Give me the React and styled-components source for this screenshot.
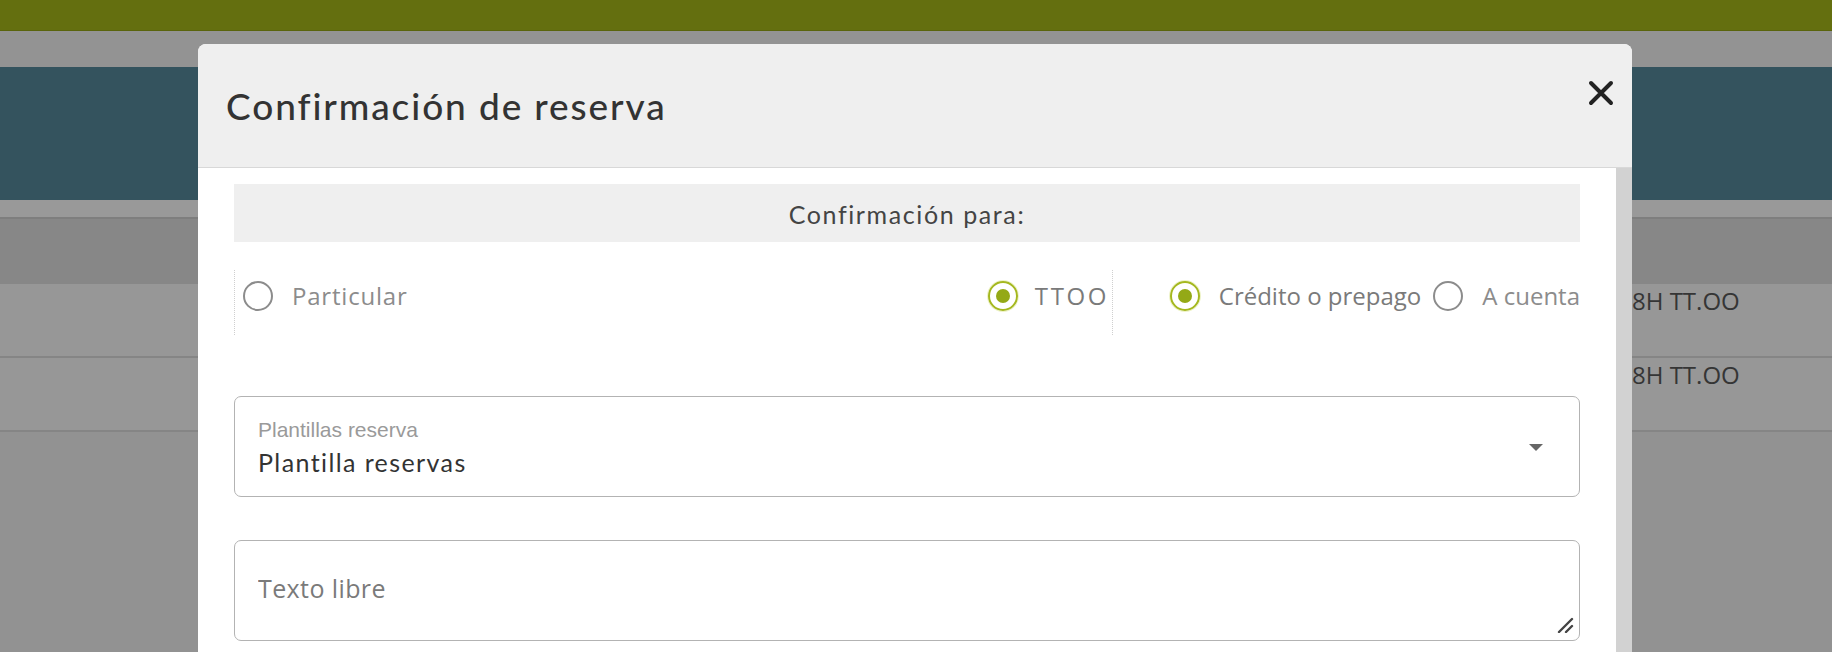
import React from "react";
import styled, { createGlobalStyle } from "styled-components";

const GlobalStyle = createGlobalStyle`
  html, body {
    margin: 0;
    padding: 0;
    overflow: hidden;
    background: #929292;
  }
  * { box-sizing: border-box; }
`;

const Page = styled.div`
  position: relative;
  width: 1832px;
  height: 652px;
  overflow: hidden;
  background: #929292;
  font-family: "Open Sans", sans-serif;
`;

const TopBar = styled.div`
  height: 31px;
  background: #646f0f;
  border-bottom: 1px solid #5a640c;
`;

const Spacer = styled.div`
  height: ${(p) => p.h}px;
  background: ${(p) => p.bg};
`;

const Banner = styled.div`
  height: 133px;
  background: #34535e;
`;

const TableHead = styled.div`
  height: 67px;
  background: #878787;
  border-top: 2px solid #7e7e7e;
`;

const TableRow = styled.div`
  height: 74px;
  background: #979797;
  border-bottom: 2px solid #858585;
  display: grid;
  grid-template-columns: 1632px 1fr;
`;

const Cell = styled.div`
  font-family: "Open Sans", sans-serif;
  font-size: 24px;
  color: #353535;
  letter-spacing: 0;
`;

const Modal = styled.div`
  position: absolute;
  left: 198px;
  top: 44px;
  width: 1434px;
  height: 640px;
  background: #fff;
  border-radius: 8px 8px 0 0;
  overflow: hidden;
  display: flex;
  flex-direction: column;
`;

const ModalHeader = styled.div`
  height: 124px;
  flex: none;
  background: #efefef;
  border-bottom: 1px solid #d8d8d8;
  display: flex;
  align-items: center;
  justify-content: space-between;
  padding: 0 16px 0 28px;
`;

const Title = styled.h2`
  margin: 0;
  font-family: Lato, sans-serif;
  font-weight: 500;
  font-size: 37px;
  color: #333;
  letter-spacing: 1.9px;
`;

const CloseButton = styled.button`
  align-self: flex-start;
  margin-top: 34px;
  width: 30px;
  height: 30px;
  padding: 0;
  border: 0;
  background: none;
  display: flex;
  align-items: center;
  justify-content: center;
  cursor: pointer;
`;

const ModalBody = styled.div`
  flex: 1;
  display: flex;
  min-height: 0;
`;

const Content = styled.div`
  flex: 1;
  padding: 16px 36px 0 36px;
`;

const Scrollbar = styled.div`
  width: 16px;
  flex: none;
  background: #d2d2d2;
`;

const SectionTitle = styled.div`
  height: 58px;
  background: #efefef;
  display: flex;
  align-items: center;
  justify-content: center;
  font-family: Lato, sans-serif;
  font-size: 25px;
  letter-spacing: 1.6px;
  color: #444;
  padding-top: 2px;
`;

const RadioRow = styled.div`
  margin-top: 28px;
  height: 65px;
  display: flex;
`;

const RadioGroup = styled.div`
  display: flex;
  align-items: center;
  justify-content: ${(p) => p.justify || "space-between"};
  gap: 12px;
  border-left: 1px dotted #cfcfcf;
  padding-left: ${(p) => p.pad || 0}px;
  padding-right: ${(p) => p.padRight || 0}px;
  padding-bottom: 14px;
  ${(p) => (p.grow ? "flex: 1;" : `width: ${p.w}px;`)}
`;

const RadioOption = styled.label`
  display: flex;
  align-items: center;
  gap: ${(p) => p.gap || 19}px;
  font-family: "Open Sans", sans-serif;
  font-size: 24px;
  letter-spacing: ${(p) => p.spacing || 0}px;
  color: ${(p) => (p.checked ? "#7a7a7a" : "#8c8c8c")};
  white-space: nowrap;
`;

const RadioMark = styled.span`
  width: 30px;
  height: 30px;
  border-radius: 50%;
  border: 2.5px solid ${(p) => (p.checked ? "#a5b81f" : "#8c8c8c")};
  box-shadow: ${(p) => (p.checked ? "0 0 0 1px #eef3c8" : "none")};
  display: flex;
  align-items: center;
  justify-content: center;
  flex: none;
  &::after {
    content: "";
    width: 14px;
    height: 14px;
    border-radius: 50%;
    background: #94a916;
    display: ${(p) => (p.checked ? "block" : "none")};
  }
`;

const Field = styled.div`
  position: relative;
  margin-top: ${(p) => p.mt}px;
  height: 101px;
  border: 1.5px solid #b3b3b3;
  border-radius: 7px;
  padding: 6px 60px 0 23px;
  display: flex;
  flex-direction: column;
  justify-content: center;
`;

const FieldLabel = styled.span`
  font-family: "Liberation Sans", sans-serif;
  font-size: 21px;
  color: #9a9a9a;
`;

const FieldValue = styled.span`
  font-family: Lato, sans-serif;
  font-size: 25px;
  letter-spacing: 1.4px;
  color: #333;
  margin-top: 5px;
  margin-bottom: 5px;
`;

const Arrow = styled.svg`
  position: absolute;
  right: 36px;
  top: 47px;
`;

const TextArea = styled.textarea`
  width: 100%;
  height: 100%;
  border: 0;
  outline: none;
  resize: none;
  padding: 0;
  background: transparent;
  font-family: "Open Sans", sans-serif;
  font-size: 25px;
  letter-spacing: 0.4px;
  color: #333;
  padding-top: 24px;
  &::placeholder {
    color: #7a7a7a;
  }
`;

const Grip = styled.svg`
  position: absolute;
  right: 4px;
  bottom: 7px;
`;

export default function App() {
  return (
    <Page>
      <GlobalStyle />
      <TopBar />
      <Spacer h={36} bg="#939393" />
      <Banner />
      <Spacer h={17} bg="#999" />
      <TableHead />
      <TableRow>
        <span />
        <Cell>8H TT.OO</Cell>
      </TableRow>
      <TableRow>
        <span />
        <Cell>8H TT.OO</Cell>
      </TableRow>

      <Modal>
        <ModalHeader>
          <Title>Confirmación de reserva</Title>
          <CloseButton aria-label="Cerrar">
            <svg width="26" height="26" viewBox="0 0 26 26">
              <path
                d="M3 3 L23 23 M23 3 L3 23"
                stroke="#222"
                strokeWidth="4"
                strokeLinecap="round"
              />
            </svg>
          </CloseButton>
        </ModalHeader>
        <ModalBody>
          <Content>
            <SectionTitle>Confirmación para:</SectionTitle>
            <RadioRow>
              <RadioGroup grow pad={8} padRight={3}>
                <RadioOption spacing={0.8}>
                  <RadioMark />
                  Particular
                </RadioOption>
                <RadioOption checked gap={17} spacing={2.6}>
                  <RadioMark checked />
                  TTOO
                </RadioOption>
              </RadioGroup>
              <RadioGroup w={468} justify="flex-end">
                <RadioOption checked>
                  <RadioMark checked />
                  Crédito o prepago
                </RadioOption>
                <RadioOption>
                  <RadioMark />
                  A cuenta
                </RadioOption>
              </RadioGroup>
            </RadioRow>
            <Field mt={61}>
              <FieldLabel>Plantillas reserva</FieldLabel>
              <FieldValue>Plantilla reservas</FieldValue>
              <Arrow width="14" height="7" viewBox="0 0 14 7">
                <path d="M0 0 H14 L7 7 Z" fill="#666" />
              </Arrow>
            </Field>
            <Field mt={43}>
              <TextArea placeholder="Texto libre" />
              <Grip width="18" height="16" viewBox="0 0 18 16">
                <path
                  d="M2 15 L15 2 M9 15 L15 9"
                  stroke="#444"
                  strokeWidth="2.4"
                  strokeLinecap="round"
                />
              </Grip>
            </Field>
          </Content>
          <Scrollbar />
        </ModalBody>
      </Modal>
    </Page>
  );
}
